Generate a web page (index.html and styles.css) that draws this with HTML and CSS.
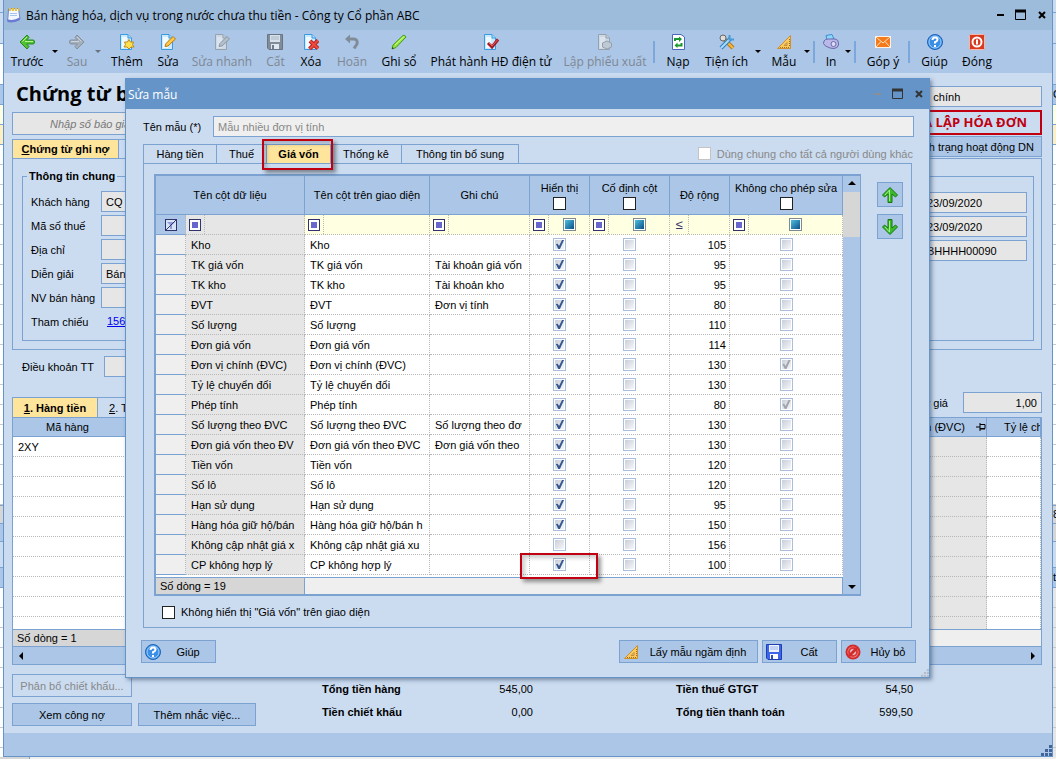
FILE: index.html
```html
<!DOCTYPE html>
<html lang="vi">
<head>
    <meta charset="UTF-8">
    <meta name="viewport" content="width=device-width, initial-scale=1.0">
    <title>Bán hàng hóa, dịch vụ trong nước chưa thu tiền</title>
    <link rel="stylesheet" href="styles.css">
</head>
<body>

<svg class="sprite" aria-hidden="true">
    <symbol id="i-left" viewBox="0 0 16 16">
        <path d="M1 8 L8 1 L10 3.500 L7.500 6 H14 Q15.500 6 15.500 8 Q15.500 10 14 10 H7.500 L10 12.500 L8 15 Z" fill="#52c234" stroke="#23891a" />
        <path d="M3.500 7.500 L8 3 M6 7.500 H14" stroke="#b9f28e" fill="none" />
    </symbol>
    <symbol id="i-page" viewBox="0 0 16 16">
        <path d="M1.500 0.500 H9 L12.500 4 V15.500 H1.500 Z" fill="#cdeafd" stroke="#3a9ae0" />
        <path d="M9 0.500 V4 H12.500" fill="#a9dbfa" stroke="#3a9ae0" />
        <path d="M3 3 H8 V14 H3 Z" fill="#fff" opacity=".7" />
    </symbol>
    <symbol id="i-save" viewBox="0 0 16 16">
        <path d="M0.500 0.500 H15.500 V15.500 H2 L0.500 14 Z" fill="#3d66e8" stroke="#1f3fb0" />
        <rect x="3" y="1" width="10" height="7" fill="#eef3ff" />
        <path d="M4 3 H12 M4 5 H12" stroke="#9ab0e8" />
        <rect x="4" y="10" width="8" height="5" fill="#fff" />
        <rect x="5" y="11" width="2" height="4" fill="#2a4cc4" />
    </symbol>
    <symbol id="i-help" viewBox="0 0 16 16">
        <circle cx="8" cy="8" r="7.500" fill="#3a8ee6" stroke="#1d62b5" />
        <circle cx="8" cy="8" r="6" fill="none" stroke="#9fd0ff" />
        <path d="M5.500 6 Q5.500 3.500 8 3.500 Q10.500 3.500 10.500 5.800 Q10.500 7.200 8 8.200 V9.500 M8 11 V13" fill="none" stroke="#fff" stroke-width="2" />
    </symbol>
    <symbol id="i-ruler" viewBox="0 0 16 16">
        <path fill-rule="evenodd" d="M14.500 1.500 V14.500 H1.500 Z M11 8.500 V11.500 H8 Z" fill="#fbc95c" stroke="#cf8f2c" />
        <path d="M4 13.500 H14 M13.500 5 V13" stroke="#96701f" stroke-dasharray="1 1" />
    </symbol>
    <symbol id="i-up" viewBox="0 0 16 16">
        <path d="M8 0.500 L15.500 8 L13.500 10 L10 7 V15.500 H6 V7 L2.500 10 L0.500 8 Z" fill="#3cb92c" stroke="#17790f" />
        <path d="M7.500 14 V3 L3 8" stroke="#a6ee8a" fill="none" />
    </symbol>
    <symbol id="i-pin" viewBox="0 0 10 8">
        <path d="M0 4 H4 M4 0 V8 M4 1.500 H9 V5.500 H4 M4 6 H9" fill="none" stroke="#000" />
    </symbol>
</svg>

<div class="strip">
    <i class="s-top"></i><i class="s-bar"></i><i class="s-white"></i><i class="s-head"></i><i class="s-filter"></i><i class="s-row"></i><i class="s-lines"></i><i class="s-foot"></i><i class="s-scroll"></i><i class="s-gap"></i><i class="s-head"></i><i class="s-rest"></i>
</div>

<main class="window">
    <header class="titlebar">
        <svg class="icon" viewBox="0 0 16 16">
            <path d="M2.500 2 L12.500 1.500 L14 12 Q9 15.500 3 14.500 Q0.500 14 2 10 Z" fill="#f3f8ff" stroke="#6f86cc" />
            <path d="M1 12 Q7 14.500 13.500 10.500 L14 13 Q8 16.500 1.500 15 Z" fill="#6b7bd2" />
            <path d="M3 2.500 H13" stroke="#e9c23d" stroke-width="3" stroke-dasharray="2 1" />
            <path d="M4 6.500 H11 M4 8.500 H11" stroke="#a8c4ee" />
        </svg>
        <span class="caption">Bán hàng hóa, dịch vụ trong nước chưa thu tiền - Công ty Cổ phần ABC</span>
        <svg class="winctl" viewBox="0 0 50 12" aria-hidden="true">
            <path d="M1 6 H8" stroke="#000" stroke-width="2" />
            <path d="M19.500 1 V10.500 H29.500 V1" fill="none" stroke="#000" /><path d="M19 2 H30" stroke="#000" stroke-width="3" />
            <path d="M43 3 L49 9 M49 3 L43 9" stroke="#000" stroke-width="2" />
        </svg>
    </header>

    <nav class="toolbar">
        <button type="button"><svg class="icon"><use href="#i-left" /></svg>Trước</button>
        <i class="caret"></i>
        <button type="button" disabled><svg class="icon flip"><use href="#i-left" /></svg>Sau</button>
        <i class="caret off"></i>
        <button type="button"><svg class="icon"><use href="#i-page" /><path d="M10 5.500 L11.500 8 L14.500 8 L13.500 10.500 L15 13 L12 13 L10 15 L8 13 L5 13 L6.500 10.500 L5.500 8 L8.500 8 Z" fill="#ffdf4d" stroke="#b98f16" /></svg>Thêm</button>
        <button type="button"><svg class="icon"><use href="#i-page" /><path d="M5 12.500 L6 9.500 L13 2.500 L15.500 5 L8 12 Z" fill="#ffc941" stroke="#b77a18" /></svg>Sửa</button>
        <button type="button" disabled><svg class="icon"><use href="#i-page" /><path d="M5 12.500 L6 9.500 L13 2.500 L15.500 5 L8 12 Z" fill="#bbb" stroke="#777" /></svg>Sửa nhanh</button>
        <button type="button" disabled><svg class="icon"><use href="#i-save" /></svg>Cất</button>
        <button type="button"><svg class="icon"><use href="#i-page" /><path d="M7 7 L15 14.500 M15 6.500 L6.500 15" stroke="#b32020" stroke-width="4" /><path d="M7 7 L15 14.500 M15 6.500 L6.500 15" stroke="#ef4b3c" stroke-width="2" /></svg>Xóa</button>
        <button type="button" disabled><svg class="icon" viewBox="0 0 16 16"><path d="M3 5 H10 Q14 5.500 13 10 L10 14.500" fill="none" stroke="#666" stroke-width="3" /><path d="M1 5 L6 0.500 V9.500 Z" fill="#666" /></svg>Hoãn</button>
        <button type="button"><svg class="icon" viewBox="0 0 16 16"><path d="M1 15 L2 11 L12 1.500 Q14 0.500 15 3 L5 13.500 Z" fill="#8ee63c" stroke="#4c9a1c" /><path d="M4 11 L13 2.500" stroke="#d8ff9c" /><path d="M1 15 L1.500 13 L3 14.500 Z" fill="#333" /></svg>Ghi sổ</button>
        <button type="button"><svg class="icon"><use href="#i-page" /><path d="M5 9 L9 13 L15 5.500" fill="none" stroke="#a01820" stroke-width="3" /><path d="M6 9 L9 12 L14.500 6" fill="none" stroke="#f06060" /></svg>Phát hành HĐ điện tử</button>
        <button type="button" disabled><svg class="icon"><use href="#i-page" /><path d="M10 7 L12 8 L14.500 9 L14.500 13 L10 15 L5.500 13 L5.500 9 Z" fill="#ccc" stroke="#888" /></svg>Lập phiếu xuất</button>
        <i class="sep"></i>
        <button type="button"><svg class="icon" viewBox="0 0 16 16"><path d="M2.500 0.500 H11 L14.500 3 V15.500 H2.500 Z" fill="#fff" stroke="#4c67b8" /><path d="M5 7 V5 H10 M11.500 9 V11.500 H6" fill="none" stroke="#16962c" stroke-width="2" /><path d="M9 2.500 L12 5 L9 8 Z M7.500 8.500 L4.500 11.500 L7.500 14 Z" fill="#16962c" /></svg>Nạp</button>
        <button type="button"><svg class="icon" viewBox="0 0 16 16"><path d="M4 4 L14 14" stroke="#b9791a" stroke-width="4" /><path d="M5 5 L14 14" stroke="#f5b93c" stroke-width="2" /><circle cx="4" cy="4" r="3" fill="#ddd" stroke="#666" /><path d="M2 14 L12 4" stroke="#2f7fc6" stroke-width="4" /><path d="M2 14 L12 4" stroke="#a9dcfa" stroke-width="2" /><path d="M10.500 1 V5.500 H15" fill="none" stroke="#4a9ada" stroke-width="2" /></svg>Tiện ích</button>
        <i class="caret"></i>
        <button type="button"><svg class="icon"><use href="#i-ruler" /></svg>Mẫu</button>
        <i class="caret"></i>
        <i class="sep"></i>
        <button type="button"><svg class="icon" viewBox="0 0 16 16"><path d="M3 1.500 L9 0.500 L11 5 L4 6 Z" fill="#8fd6fa" stroke="#3b8fd0" /><path d="M1 7 Q2 5 5 5 H12 Q15.500 5.500 15.500 9 V11 Q15 14 11 14.500 L7 14 Q1 12 0.500 9.500 Z" fill="#b9b8e6" stroke="#6a69ad" /><circle cx="10.500" cy="10" r="2.500" fill="#dcdcf8" stroke="#6a69ad" /></svg>In</button>
        <i class="caret"></i>
        <i class="sep"></i>
        <button type="button"><svg class="icon" viewBox="0 0 16 16"><rect x="0.500" y="2.500" width="15" height="11" fill="#f47a1c" stroke="#fff2e2" /><path d="M1 3 L8 9 L15 3 M1 13 L6 7.500 M15 13 L10 7.500" fill="none" stroke="#ffe2bd" /></svg>Góp ý</button>
        <i class="sep"></i>
        <button type="button"><svg class="icon"><use href="#i-help" /></svg>Giúp</button>
        <button type="button"><svg class="icon" viewBox="0 0 16 16"><rect x="0.500" y="0.500" width="15" height="15" rx="1" fill="#d8391f" stroke="#f6b7a8" /><circle cx="8" cy="8" r="4.500" fill="none" stroke="#fff" stroke-width="2" /><path d="M8 5.500 V10.500" stroke="#fff" stroke-width="2" /></svg>Đóng</button>
    </nav>

    <form class="voucher">
        <div class="head">
            <div class="head-left">
                <h1>Chứng từ bán hàng</h1>
                <input class="quote" type="text" value="Nhập số báo giá" aria-label="Số báo giá" readonly>
                <div class="tabs"><button type="button" class="tab on wide"><u>C</u>hứng từ ghi nợ</button><button type="button" class="tab"></button></div>
            </div>
            <div class="head-right">
                <input class="ledger" type="text" value="Tài chính" aria-label="Sổ" readonly>
                <strong class="stamp">CHƯA LẬP HÓA ĐƠN</strong>
                <button type="button" class="btn status">Tình trạng hoạt động DN</button>
            </div>
        </div>

        <div class="info">
            <fieldset class="general">
                <legend>Thông tin chung</legend>
                <label for="customer">Khách hàng</label><input id="customer" type="text" value="CQ" readonly>
                <label for="taxcode">Mã số thuế</label><input id="taxcode" type="text" readonly>
                <label for="address">Địa chỉ</label><input id="address" type="text" readonly>
                <label for="memo">Diễn giải</label><input id="memo" type="text" value="Bán hàng" readonly>
                <label for="seller">NV bán hàng</label><input id="seller" type="text" readonly>
                <span>Tham chiếu</span><a href="#">156</a>
            </fieldset>
            <fieldset class="dates">
                <input type="text" value="23/09/2020" aria-label="Ngày hạch toán" readonly>
                <input type="text" value="23/09/2020" aria-label="Ngày chứng từ" readonly>
                <input type="text" value="BHHHH00090" aria-label="Số chứng từ" readonly>
            </fieldset>
        </div>

        <div class="terms">
            <label for="terms">Điều khoản TT</label><input id="terms" type="text" readonly>
        </div>

        <div class="lines-bar">
            <div class="tabs"><button type="button" class="tab on"><u>1</u>. Hàng tiền</button><button type="button" class="tab next"><u>2</u>. Thuế</button></div>
            <div class="rate"><label for="rate">Tỷ giá</label><input id="rate" type="text" value="1,00" readonly></div>
        </div>
        <div class="lines">
            <div class="lines-view">
                <table>
                    <colgroup><col class="c-item"><col><col class="c-unit"><col class="c-ratio"></colgroup>
                    <thead>
                        <tr><th>Mã hàng <svg class="pin"><use href="#i-pin" /></svg></th><th></th><th class="end">Đơn vị chính (ĐVC) <svg class="pin"><use href="#i-pin" /></svg></th><th class="start">Tỷ lệ chuyển đổi</th></tr>
                    </thead>
                    <tbody>
                        <tr><td>2XY</td><td></td><td></td><td></td></tr>
                        <tr><td></td><td></td><td></td><td></td></tr>
                        <tr><td></td><td></td><td></td><td></td></tr>
                        <tr><td></td><td></td><td></td><td></td></tr>
                        <tr><td></td><td></td><td></td><td></td></tr>
                        <tr><td></td><td></td><td></td><td></td></tr>
                        <tr><td></td><td></td><td></td><td></td></tr>
                        <tr><td></td><td></td><td></td><td></td></tr>
                        <tr><td></td><td></td><td></td><td></td></tr>
                        <tr><td></td><td></td><td></td><td></td></tr>
                    </tbody>
                </table>
            </div>
            <div class="count"><span>Số dòng = 1</span></div>
            <div class="hscroll"><i class="arrow-l"></i><i class="thumb"></i><i class="arrow-r"></i></div>
        </div>

        <div class="summary">
            <div class="actions">
                <button type="button" class="btn" disabled>Phân bổ chiết khấu...</button><span></span>
                <button type="button" class="btn">Xem công nợ</button><button type="button" class="btn">Thêm nhắc việc...</button>
            </div>
            <dl class="totals">
                <dt>Tổng tiền hàng</dt><dd>545,00</dd><dt>Tiền thuế GTGT</dt><dd>54,50</dd>
                <dt>Tiền chiết khấu</dt><dd>0,00</dd><dt>Tổng tiền thanh toán</dt><dd>599,50</dd>
            </dl>
        </div>
    </form>
    <footer class="statusbar"><svg class="grip" viewBox="0 0 11 11"><path d="M8 1.500 H11 M4 5.500 H11 M0 9.500 H11" stroke="#41659a" stroke-width="3" stroke-dasharray="3 1" /></svg></footer>
</main>

<div class="strip right">
    <i class="s-top"></i><i class="s-bar"></i><i class="s-gap2"></i><i class="s-head">C</i><i class="s-filter"></i><i class="s-row"></i><i class="s-lines"></i><i class="s-foot">8</i><i class="s-scroll gray"></i><i class="s-gap"></i><i class="s-head">t</i><i class="s-rest gray"></i>
</div>
<div class="under"></div>

<section class="dialog" role="dialog" aria-label="Sửa mẫu">
    <header class="dialog-title">
        <span>Sửa mẫu</span>
        <svg class="winctl" viewBox="0 0 50 12" aria-hidden="true">
            <path d="M1 6 H8" stroke="#8a8f96" stroke-width="2" />
            <path d="M19.500 1 V10.500 H29.500 V1" fill="none" stroke="#333" /><path d="M19 2 H30" stroke="#333" stroke-width="3" />
            <path d="M43 3 L49 9 M49 3 L43 9" stroke="#333" stroke-width="2" />
        </svg>
    </header>
    <div class="name-row">
        <label for="tplName">Tên mẫu (*)</label><input id="tplName" type="text" value="Mẫu nhiều đơn vị tính" readonly>
    </div>
    <div class="dialog-tabs">
        <div class="tabs">
            <button type="button" class="tab t1">Hàng tiền</button><button type="button" class="tab t2">Thuế</button><button type="button" class="tab t3 on marked">Giá vốn</button><button type="button" class="tab t4">Thống kê</button><button type="button" class="tab t5">Thông tin bổ sung</button>
        </div>
        <label class="tick dim"><input type="checkbox" class="box" disabled>Dùng chung cho tất cả người dùng khác</label>
    </div>
    <div class="panel">
        <div class="panel-main">
            <div class="grid">
                <div class="grid-body">
                    <table id="columns">
                        <colgroup><col class="w-mark"><col class="w-field"><col class="w-name"><col class="w-note"><col class="w-show"><col class="w-fix"><col class="w-size"><col class="w-lock"></colgroup>
                        <thead>
                            <tr>
                                <th colspan="2">Tên cột dữ liệu</th>
                                <th>Tên cột trên giao diện</th>
                                <th>Ghi chú</th>
                                <th><label class="stack">Hiển thị<input type="checkbox" class="box"></label></th>
                                <th><label class="stack">Cố định cột<input type="checkbox" class="box"></label></th>
                                <th>Độ rộng</th>
                                <th><label class="stack">Không cho phép sửa<input type="checkbox" class="box"></label></th>
                            </tr>
                            <tr class="filter">
                                <td><svg class="clear" viewBox="0 0 12 12"><rect x="0.500" y="0.500" width="11" height="11" fill="#d6e4f6" stroke="#33336b" /><path d="M2 3 H10 L7 6 V10 H5 V6 Z" fill="#8f9bd6" /><path d="M1 11 L11 1" stroke="#33336b" /></svg></td>
                                <td><div><b class="op"></b></div></td>
                                <td><div><b class="op"></b></div></td>
                                <td><div><b class="op"></b></div></td>
                                <td><div><b class="op"></b><span><input type="checkbox" class="cell any" aria-label="Lọc hiển thị"></span></div></td>
                                <td><div><b class="op"></b><span><input type="checkbox" class="cell any" aria-label="Lọc cố định cột"></span></div></td>
                                <td><div><b class="le">≤</b></div></td>
                                <td><div><b class="op"></b><span><input type="checkbox" class="cell any" aria-label="Lọc không cho phép sửa"></span></div></td>
                            </tr>
                        </thead>
                        <tbody></tbody>
                    </table>
                    <div class="count"><span>Số dòng = 19</span></div>
                </div>
                <div class="vscroll"><i class="arrow-u"></i><i class="thumb"></i><i class="arrow-d"></i></div>
            </div>
            <div class="move">
                <button type="button" class="btn" aria-label="Lên"><svg class="icon"><use href="#i-up" /></svg></button>
                <button type="button" class="btn" aria-label="Xuống"><svg class="icon turn"><use href="#i-up" /></svg></button>
            </div>
        </div>
        <label class="tick"><input type="checkbox" class="box">Không hiển thị "Giá vốn" trên giao diện</label>
    </div>
    <div class="buttons">
        <button type="button" class="btn"><svg class="icon"><use href="#i-help" /></svg><span>Giúp</span></button>
        <button type="button" class="btn big"><svg class="icon"><use href="#i-ruler" /></svg><span>Lấy mẫu ngầm định</span></button>
        <button type="button" class="btn"><svg class="icon"><use href="#i-save" /></svg><span>Cất</span></button>
        <button type="button" class="btn"><svg class="icon" viewBox="0 0 16 16"><circle cx="8" cy="8" r="7.500" fill="#d32a2a" /><circle cx="8" cy="8" r="5.500" fill="#f8a0a0" /><circle cx="8" cy="8" r="4" fill="#e9c5cd" stroke="#d93838" stroke-width="2" /><path d="M4 12 L12 4" stroke="#d32a2a" stroke-width="3" /></svg><span>Hủy bỏ</span></button>
    </div>
    <div class="dialog-foot"><svg class="grip small" viewBox="0 0 11 11"><path d="M8 1.500 H11 M4 5.500 H11 M0 9.500 H11" stroke="#b4bdc9" stroke-width="3" stroke-dasharray="3 1" /></svg></div>
</section>

<script src="script.js"></script>
</body>
</html>
```
FILE: styles.css
```css
* {
    box-sizing: border-box;
}
body {
    margin: 0;
    min-height: 100vh;
    display: grid;
    grid-template-columns: 3px minmax(0, 1fr) 3px;
    grid-template-rows: 1fr 2px;
    font-family: "Liberation Sans", Arial, sans-serif;
    font-size: 11px;
    line-height: 14px;
    color: #000;
    background-color: #fff;
}
button, input {
    font: inherit;
    color: inherit;
    margin: 0;
    padding: 0;
    border-radius: 0;
}
button {
    background: none;
    border: none;
    cursor: pointer;
    white-space: nowrap;
}
input[type="text"] {
    height: 21px;
    min-width: 0;
    padding: 0 4px;
    border: 1px solid #7ba2d0;
    background-color: #e6e6e6;
}
.sprite {
    position: absolute;
    width: 0;
    height: 0;
}
.icon {
    width: 16px;
    height: 16px;
    flex: none;
}
.flip {
    transform: scaleX(-1);
}
.turn {
    transform: scaleY(-1);
}

/* program behind the window */
.strip {
    display: flex;
    flex-direction: column;
    overflow: hidden;
}
.strip i {
    flex: none;
    font-style: normal;
    border-bottom: 1px solid #7ba2d0;
    height: 20px;
    line-height: 19px;
}
.strip .s-top { height: 13px; background-color: #cbdcf1; }
.strip .s-bar { height: 31px; background-color: #cbdcf1; }
.strip .s-white { height: 41px; background-color: #fff; }
.strip .s-gap2 { height: 41px; background-color: #cbdcf1; }
.strip .s-head { background-color: #abc6e6; }
.strip .s-filter { background-color: #ffffe1; }
.strip .s-row { background-color: #ffeec0; }
.strip .s-lines { height: 361px; background: repeating-linear-gradient(#fff 0 19px, #c8c8c8 19px 20px); }
.strip .s-foot { height: 18px; line-height: 17px; background-color: #d6d6d6; }
.strip .s-scroll { height: 18px; background-color: #abc6e6; }
.strip .s-gap { height: 26px; background-color: #cbdcf1; }
.strip .s-rest { flex: 1; border: none; background: repeating-linear-gradient(#fff 0 19px, #c8c8c8 19px 20px); }
.strip .s-scroll.gray { background-color: #d6d6d6; }
.strip .s-rest.gray { background: repeating-linear-gradient(#e6e6e6 0 19px, #c8c8c8 19px 20px); }
.under {
    grid-column: 1 / -1;
    background: linear-gradient(90deg, #d6d6d6 29px, #7ba2d0 29px 30px, #efefef 30px);
}

/* main window */
.window {
    display: flex;
    flex-direction: column;
    border: 1px solid #6595c8;
    border-top: none;
    background-color: #cbdcf1;
}
.titlebar {
    display: flex;
    align-items: center;
    height: 30px;
    padding: 0 6px 0 2px;
    background-color: #9dbbdb;
    font: 12px "Open Sans", "Noto Sans", sans-serif;
}
.caption {
    flex: 1;
    margin-left: 4px;
}
.winctl {
    width: 50px;
    height: 12px;
}
.toolbar {
    display: grid;
    grid-template-columns: 46px 10px 34px 8px 50px 32px 76px 31px 40px 42px 52px 132px 96px 2px 46px 51px 12px 40px 6px 8px 26px 7px 8px 48px 4px 47px 38px;
    align-items: center;
    justify-items: center;
    height: 43px;
    padding-top: 2px;
    background-color: #abc6e6;
    font: 12px "Open Sans", "Noto Sans", sans-serif;
}
.toolbar button {
    display: flex;
    flex-direction: column;
    align-items: center;
    gap: 3px;
    line-height: 18px;
}
.toolbar button:disabled {
    color: #7f8792;
}
.toolbar button:disabled .icon {
    filter: grayscale(1);
    opacity: .6;
}
.caret {
    border: 3px solid transparent;
    border-top-color: #000;
    border-bottom: none;
    margin-top: -2px;
}
.caret.off {
    border-top-color: #6b737e;
}
.sep {
    width: 2px;
    height: 22px;
    margin-top: -2px;
    background-color: #7ba7da;
}
.voucher {
    flex: 1;
    padding: 0 10px 0 8px;
}
.head {
    display: flex;
    justify-content: space-between;
    padding-top: 8px;
}
.head-left, .head-right {
    display: flex;
    flex-direction: column;
}
.head-left {
    width: 300px;
}
.head-right {
    align-items: flex-end;
    gap: 3px;
    padding-top: 5px;
}
h1 {
    margin: 0;
    padding-left: 4px;
    font: bold 20px/26px "Open Sans", "Noto Sans", sans-serif;
}
.head-left .quote {
    height: 23px;
    margin: 5px 0 4px;
    padding-left: 37px;
    font-style: italic;
    color: #777;
}
.head-right .ledger {
    width: 136px;
    padding-left: 8px;
}
.stamp {
    padding: 0 13px;
    border: 2px solid #c00010;
    color: #c00010;
    font: bold 13px/21px "Open Sans", "Noto Sans", sans-serif;
}
.tabs {
    display: flex;
}
.tab {
    height: 20px;
    min-width: 86px;
    border: 1px solid #7ba2d0;
    border-bottom: none;
}
.tab + .tab {
    margin-left: -1px;
}
.tab.on {
    font-weight: bold;
    background-color: #ffe49b;
}
.tab.wide {
    min-width: 107px;
}
.tab.next {
    padding-left: 11px;
    text-align: left;
}
.btn {
    height: 23px;
    border: 1px solid #7ba2d0;
    background-color: #abc6e6;
}
.btn:disabled {
    background-color: #cbdcf1;
    color: #888;
}
.head .tab {
    height: 19px;
}
.head-right .status {
    padding: 0 7px;
    margin-top: -2px;
    height: 21px;
}
.info {
    display: flex;
    justify-content: space-between;
    gap: 8px;
    padding: 9px 7px 8px 9px;
    border: 1px solid #7ba2d0;
}
fieldset {
    margin: 0;
    border: 1px solid #7ba2d0;
    padding: 0 8px 8px;
    min-width: 0;
}
.general {
    flex: 1;
    display: grid;
    grid-template-columns: 70px 1fr;
    row-gap: 3px;
    align-items: center;
    padding-top: 7px;
}
.general a {
    height: 21px;
    padding-left: 6px;
    line-height: 21px;
    color: #0000ee;
}
.general legend {
    margin-left: -4px;
    padding: 0 2px;
    line-height: 16px;
    font-weight: bold;
}
.dates {
    display: flex;
    flex-direction: column;
    align-items: flex-end;
    gap: 3px;
    width: 250px;
    margin-top: 8px;
    padding: 15px 6px 8px;
}
.dates input[type="text"] {
    width: 107px;
    padding-left: 6px;
}
.terms {
    display: flex;
    align-items: center;
    margin-top: 6px;
    padding-left: 10px;
}
.terms label {
    width: 82px;
}
.lines-bar {
    display: flex;
    justify-content: space-between;
    align-items: flex-end;
    margin-top: 15px;
}
.rate {
    display: flex;
    align-items: center;
    gap: 15px;
    padding-bottom: 4px;
}
.rate input[type="text"] {
    width: 79px;
    text-align: right;
}
.lines {
    border: 1px solid #7ba2d0;
}
.lines-view {
    height: 211px;
    overflow: hidden;
    background-color: #fff;
}
table {
    width: 100%;
    table-layout: fixed;
    border-spacing: 0;
}
th {
    padding: 0;
    font-weight: normal;
    background-color: #abc6e6;
    border-right: 1px solid #7ba2d0;
    border-bottom: 1px solid #7ba2d0;
}
td {
    height: 20px;
    padding: 0 5px;
    white-space: nowrap;
    overflow: hidden;
    border-right: 1px dotted #b8b8b8;
    border-bottom: 1px dotted #b8b8b8;
}
.c-item { width: 131px; }
.c-unit { width: 180px; }
.c-ratio { width: 54px; }
.lines th {
    height: 19px;
    white-space: nowrap;
    overflow: hidden;
}
.lines th.end {
    text-align: right;
}
.lines th.start {
    padding-left: 17px;
    text-align: left;
}
.lines th .pin {
    float: right;
    margin: 3px 0 0 11px;
}
.lines td:nth-child(3) {
    background-color: #e6e6e6;
}
.pin {
    width: 10px;
    height: 8px;
}
.count {
    height: 17px;
    border-top: 1px solid #7ba2d0;
    background-color: #efefef;
}
.count span {
    display: block;
    width: 149px;
    height: 16px;
    padding-left: 4px;
    line-height: 16px;
    border-right: 1px solid #7ba2d0;
    background-color: #d6d6d6;
}
.hscroll, .vscroll {
    display: flex;
    align-items: center;
    background-color: #abc6e6;
}
.hscroll {
    height: 18px;
    padding: 0 6px;
    gap: 6px;
    border-top: 1px solid #7ba2d0;
}
.hscroll .thumb {
    align-self: stretch;
    width: 160px;
    margin-left: auto;
}
.arrow-l, .arrow-r {
    border: 4px solid transparent;
}
.arrow-l {
    border-right-color: #000;
    border-left: none;
}
.arrow-r {
    border-left-color: #000;
    border-right: none;
}
.summary {
    display: flex;
    padding-top: 9px;
}
.actions {
    display: grid;
    grid-template-columns: 120px 118px;
    gap: 6px;
}
.totals {
    flex: 1;
    display: grid;
    grid-template-columns: 130px 81px 280px 100px;
    align-content: start;
    row-gap: 9px;
    margin: 8px 0 0 66px;
}
.totals dt {
    font-weight: bold;
}
.totals dt:nth-of-type(even) {
    padding-left: 143px;
}
.totals dd {
    margin: 0;
    text-align: right;
}
.statusbar {
    display: flex;
    align-items: flex-end;
    justify-content: flex-end;
    height: 23px;
    background-color: #abc6e6;
}
.grip {
    width: 11px;
    height: 11px;
}
.grip.small {
    width: 8px;
    height: 8px;
}

/* template dialog */
.dialog {
    position: absolute;
    top: 78px;
    left: 125px;
    right: 126px;
    border: 1px solid #6595c8;
    background-color: #cbdcf1;
    box-shadow: 2px 2px 4px rgba(40, 60, 90, 0.5);
}
.dialog-title {
    display: flex;
    align-items: center;
    justify-content: space-between;
    height: 30px;
    padding: 0 6px 0 2px;
    background-color: #6595c8;
    color: #fff;
    font: 12px "Open Sans", "Noto Sans", sans-serif;
}
.name-row {
    display: flex;
    align-items: center;
    padding: 7px 15px 7px 17px;
}
.name-row label {
    width: 70px;
}
.name-row input[type="text"] {
    flex: 1;
    background-color: #efefef;
    color: #888;
}
.dialog-tabs {
    display: flex;
    justify-content: space-between;
    padding: 0 16px 0 17px;
}
.dialog-tabs .tab {
    height: 19px;
    min-width: 0;
}
.t1 { width: 74px; }
.t2 { width: 51px; }
.t3 { width: 65px; }
.t4 { width: 72px; }
.t5 { width: 118px; }
.tick {
    display: flex;
    align-items: center;
    gap: 6px;
}
.tick.dim {
    color: #888;
}
.marked {
    position: relative;
}
.marked::after {
    content: "";
    position: absolute;
    inset: -6px -3px -7px -5px;
    border: 2px solid #c00010;
    box-shadow: 3px 3px 4px rgba(0, 0, 0, 0.4), inset 3px 3px 4px rgba(0, 0, 0, 0.2);
    pointer-events: none;
}
.panel {
    margin: 0 17px;
    padding: 10px 8px 8px 10px;
    border: 1px solid #7ba2d0;
}
.panel .tick {
    margin: 9px 0 0 8px;
}
.panel-main {
    display: flex;
    align-items: flex-start;
    gap: 16px;
}
.grid {
    flex: 1;
    display: flex;
    min-width: 0;
    border: 2px solid #7ba2d0;
    border-right-width: 1px;
}
.grid-body {
    flex: 1;
    min-width: 0;
    background-color: #fff;
}
.grid-body .count {
    margin-top: 2px;
    border-right: 1px solid #7ba2d0;
}
.w-mark { width: 30px; }
.w-field { width: 119px; }
.w-name { width: 125px; }
.w-note { width: 100px; }
.w-show { width: 60px; }
.w-fix { width: 80px; }
.w-size { width: 60px; }
.w-lock { width: 113px; }
#columns th {
    height: 39px;
}
#columns td:nth-child(1) {
    padding: 0;
    background-color: #efefef;
    border-bottom: 1px solid #7ba2d0;
}
#columns td:nth-child(2) {
    background-color: #e6e6e6;
}
#columns td:nth-child(5), #columns td:nth-child(6), #columns td:nth-child(8) {
    text-align: center;
    line-height: 0;
}
#columns td:nth-child(7) {
    text-align: right;
    padding-right: 3px;
}
#columns td.marked {
    overflow: visible;
}
#columns td.marked::after {
    inset: -2px -9px -5px -10px;
}
#columns .filter td {
    padding: 0;
    background-color: #ffffe1;
}
#columns .filter td:nth-child(1) {
    background-color: #abc6e6;
    text-align: center;
    line-height: 0;
}
#columns .filter td:nth-child(2) {
    background-color: #e6e6e6;
}
.clear {
    width: 12px;
    height: 12px;
}
.filter div {
    display: flex;
    align-items: center;
    height: 19px;
}
.filter div::before {
    content: "";
    order: 1;
    height: 19px;
    border-left: 1px dotted #b8b8b8;
}
.filter span {
    flex: 1;
    order: 2;
}
.op, .le {
    flex: none;
    width: 12px;
    height: 12px;
    margin: 0 3px;
}
.op {
    border: 1px solid #33336b;
    background: linear-gradient(#6666cc, #6666cc) center / 6px 6px no-repeat #fff;
}
.le {
    font-size: 13px;
    line-height: 12px;
    font-weight: normal;
    text-align: center;
    color: #33336b;
}
.stack {
    display: flex;
    flex-direction: column;
    align-items: center;
    gap: 2px;
    white-space: nowrap;
}
.box, .cell {
    appearance: none;
    width: 13px;
    height: 13px;
    flex: none;
    background-color: #fff;
}
.box {
    border: 1px solid #222;
}
.box:disabled {
    border-color: #c4c4c4;
}
.cell {
    border: 1px solid #a9bedd;
    padding: 1px;
    background: linear-gradient(135deg, #c9ced8, #f6f7f9) content-box, #fff;
}
.cell:checked::before {
    content: "";
    display: block;
    width: 9px;
    height: 9px;
    background-color: #35588f;
    clip-path: polygon(10% 45%, 30% 42%, 45% 66%, 78% 0, 100% 0, 55% 100%, 36% 100%);
}
.cell:disabled::before {
    background-color: #a0a4ab;
}
.cell.any {
    border-color: #7e8b92;
    background: linear-gradient(135deg, #4cc0e0, #0c4e86) content-box, #fff;
}
.vscroll {
    flex-direction: column;
    width: 17px;
    padding: 5px 0;
}
.vscroll .thumb {
    align-self: stretch;
    height: 45px;
    margin-top: 7px;
    margin-bottom: auto;
    background-color: #d6d6d6;
}
.arrow-u, .arrow-d {
    border: 4px solid transparent;
}
.arrow-u {
    border-bottom-color: #000;
    border-top: none;
}
.arrow-d {
    border-top-color: #000;
    border-bottom: none;
}
.move {
    display: flex;
    flex-direction: column;
    gap: 7px;
    padding-top: 8px;
}
.move .btn {
    display: flex;
    align-items: center;
    justify-content: center;
    width: 26px;
    height: 25px;
}
.buttons {
    display: flex;
    gap: 4px;
    padding: 12px 13px 0 15px;
}
.buttons .btn {
    display: flex;
    align-items: center;
    width: 75px;
    padding-left: 3px;
}
.buttons .big {
    width: 139px;
    margin-left: auto;
}
.buttons span {
    flex: 1;
    text-align: center;
}
.dialog-foot {
    display: flex;
    justify-content: flex-end;
    align-items: flex-end;
    height: 14px;
}
```
FILE: script.js
```js
// field, caption, note, visible, width, locked
const columns = [
    ['Kho', 'Kho', '', true, 105, false],
    ['TK giá vốn', 'TK giá vốn', 'Tài khoản giá vốn', true, 95, false],
    ['TK kho', 'TK kho', 'Tài khoản kho', true, 95, false],
    ['ĐVT', 'ĐVT', 'Đơn vị tính', true, 80, false],
    ['Số lượng', 'Số lượng', '', true, 110, false],
    ['Đơn giá vốn', 'Đơn giá vốn', '', true, 114, false],
    ['Đơn vị chính (ĐVC)', 'Đơn vị chính (ĐVC)', '', true, 130, true],
    ['Tỷ lệ chuyển đổi', 'Tỷ lệ chuyển đổi', '', true, 130, false],
    ['Phép tính', 'Phép tính', '', true, 80, true],
    ['Số lượng theo ĐVC', 'Số lượng theo ĐVC', 'Số lượng theo đơ', true, 130, false],
    ['Đơn giá vốn theo ĐV', 'Đơn giá vốn theo ĐVC', 'Đơn giá vốn theo', true, 130, false],
    ['Tiền vốn', 'Tiền vốn', '', true, 120, false],
    ['Số lô', 'Số lô', '', true, 120, false],
    ['Hạn sử dụng', 'Hạn sử dụng', '', true, 95, false],
    ['Hàng hóa giữ hộ/bán', 'Hàng hóa giữ hộ/bán h', '', true, 150, false],
    ['Không cập nhật giá x', 'Không cập nhật giá xu', '', false, 156, false],
    ['CP không hợp lý', 'CP không hợp lý', '', true, 100, false]
];

function tick(label, checked, disabled) {
    return `<input type="checkbox" class="cell" aria-label="${label}"${checked ? ' checked' : ''}${disabled ? ' disabled' : ''}>`;
}

const tbody = document.querySelector('#columns tbody');
for (const [field, caption, note, visible, width, locked] of columns) {
    const row = tbody.insertRow();
    row.innerHTML = `
        <td></td>
        <td>${field}</td>
        <td>${caption}</td>
        <td>${note}</td>
        <td>${tick('Hiển thị ' + field, visible)}</td>
        <td>${tick('Cố định ' + field, false)}</td>
        <td>${width}</td>
        <td>${tick('Không cho phép sửa ' + field, locked, locked)}</td>
    `;
}
tbody.lastElementChild.cells[4].className = 'marked';
```
